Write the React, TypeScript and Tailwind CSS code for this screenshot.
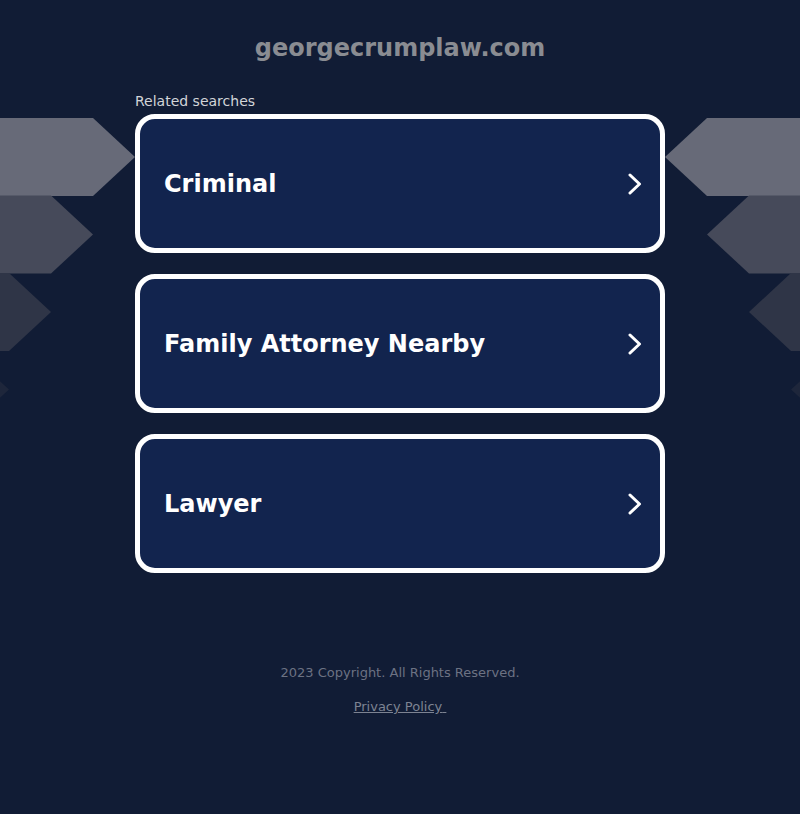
import React from "react";

const searches = ["Criminal", "Family Attorney Nearby", "Lawyer"];

const shades = ["#676a78", "#464a5a", "#2f3547", "#1e263b"];

function LeftArrows() {
  return (
    <svg
      className="absolute left-0 top-[118px]"
      width="136"
      height="320"
      viewBox="0 0 136 320"
    >
      {shades.map((c, i) => {
        const tip = 135 - 42 * i;
        const body = 93 - 42 * i;
        const y = 77.5 * i;
        return (
          <polygon
            key={i}
            fill={c}
            points={`0,${y} ${body},${y} ${tip},${y + 39} ${body},${y + 78} 0,${y + 78}`}
          />
        );
      })}
    </svg>
  );
}

function RightArrows() {
  return (
    <svg
      className="absolute right-0 top-[118px]"
      width="136"
      height="320"
      viewBox="0 0 136 320"
    >
      {shades.map((c, i) => {
        const tip = 1 + 42 * i;
        const body = 43 + 42 * i;
        const y = 77.5 * i;
        return (
          <polygon
            key={i}
            fill={c}
            points={`136,${y} ${body},${y} ${tip},${y + 39} ${body},${y + 78} 136,${y + 78}`}
          />
        );
      })}
    </svg>
  );
}

function Chevron() {
  return (
    <svg width="14" height="22" viewBox="0 0 14 22" className="shrink-0">
      <polyline
        points="2,2 11.5,11 2,20"
        fill="none"
        stroke="#ffffff"
        strokeWidth="3"
        strokeLinecap="round"
        strokeLinejoin="round"
      />
    </svg>
  );
}

export default function App() {
  return (
    <div
      className="relative min-h-[814px] w-full overflow-hidden bg-[#111c35]"
      style={{ fontFamily: '"DejaVu Sans", Verdana, sans-serif' }}
    >
      <LeftArrows />
      <RightArrows />
      <div className="relative flex flex-col items-center pt-[33px]">
        <h1 className="text-[24px] font-bold leading-[30px] text-[#8a8c92]">
          georgecrumplaw.com
        </h1>
        <div className="mt-[29px] w-[530px]">
          <p className="text-[14px] leading-[18px] text-[#d2d4d8]">Related searches</p>
          <div className="mt-[4px] flex flex-col gap-[21px]">
            {searches.map((s) => (
              <a
                key={s}
                href="#"
                className="flex h-[139px] items-center justify-between rounded-[20px] border-[5px] border-white bg-[#12244e] pl-[24px] pr-[18px]"
              >
                <span className="text-[24px] font-bold text-white">{s}</span>
                <Chevron />
              </a>
            ))}
          </div>
        </div>
        <p className="mt-[92px] text-[13px] leading-[16px] text-[#6c7283]">
          2023 Copyright. All Rights Reserved.
        </p>
        <a
          href="#"
          className="mt-[18px] text-[13px] leading-[16px] text-[#7d8392] underline"
        >
          Privacy Policy{"\u00a0"}
        </a>
      </div>
    </div>
  );
}
